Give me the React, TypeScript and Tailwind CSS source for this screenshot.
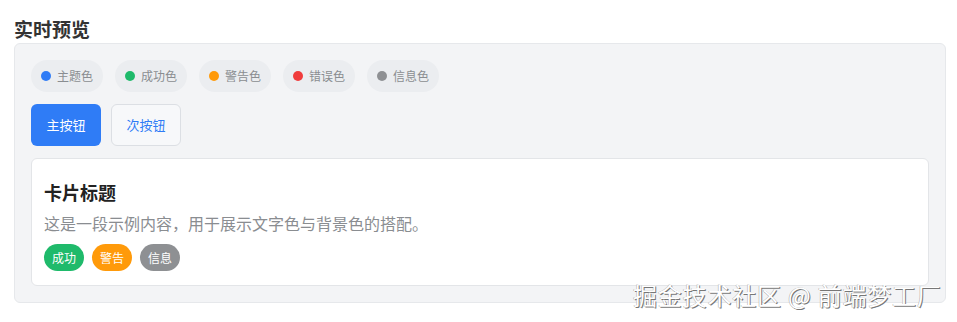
import React from "react";

const chips = [
  { name: "主题色", color: "bg-[#2f7cf6]" },
  { name: "成功色", color: "bg-[#1fba6b]" },
  { name: "警告色", color: "bg-[#ff9a0a]" },
  { name: "错误色", color: "bg-[#f03c3c]" },
  { name: "信息色", color: "bg-[#8e9093]" },
];

const badges = [
  { name: "成功", color: "bg-[#1fba6b]" },
  { name: "警告", color: "bg-[#ff9a0a]" },
  { name: "信息", color: "bg-[#8e9093]" },
];

// live preview panel
export default function App() {
  return (
    <div
      className="relative w-[957px] h-[322px] bg-white pl-[14px] pr-[11px] pt-[14px]"
      style={{ fontFamily: '"Noto Sans CJK SC", "Noto Sans", sans-serif' }}
    >
      <h2 className="text-[19px] leading-[29px] font-bold text-[#333]">实时预览</h2>

      <div className="border border-[#e6e8eb] bg-[#f3f4f6] rounded-[6px] p-4 flex flex-col gap-3">
        {/* colour chips */}
        <div className="flex items-center gap-3">
          {chips.map((c) => (
            <div
              key={c.name}
              className="h-8 px-[10px] rounded-full bg-[#ebedf0] flex items-center gap-[6px]"
            >
              <span className={`w-[10px] h-[10px] rounded-full ${c.color}`} />
              <span className="text-[12px] text-[#8a8d91]">{c.name}</span>
            </div>
          ))}
        </div>

        {/* buttons */}
        <div className="flex items-center gap-[10px]">
          <button className="h-[42px] w-[70px] rounded-[6px] bg-[#2f7cf6] text-white text-[13px]">
            主按钮
          </button>
          <button className="h-[42px] w-[70px] rounded-[6px] bg-[#f7f8fa] border border-[#dcdfe4] text-[#2f7cf6] text-[13px]">
            次按钮
          </button>
        </div>

        {/* card */}
        <div className="bg-white border border-[#e3e5e8] rounded-[6px] px-3 pt-[20px] pb-[14px]">
          <h3 className="text-[18px] leading-[26px] font-bold text-[#222]">卡片标题</h3>
          <p className="mt-[6px] text-[16px] leading-[24px] text-[#8a8d91]">
            这是一段示例内容，用于展示文字色与背景色的搭配。
          </p>
          <div className="mt-[9px] flex items-center gap-2">
            {badges.map((b) => (
              <span
                key={b.name}
                className={`h-[27px] px-2 rounded-full text-white text-[12px] flex items-center ${b.color}`}
              >
                {b.name}
              </span>
            ))}
          </div>
        </div>
      </div>

      {/* watermark */}
      <div
        className="absolute left-[633px] top-[278px] text-[24px] leading-[34px] text-white tracking-[0.8px]"
        style={{ textShadow: "1px 1px 0 #777, -0.5px -0.5px 0 #aaa" }}
      >
        掘金技术社区 @ 前端梦工厂
      </div>
    </div>
  );
}
